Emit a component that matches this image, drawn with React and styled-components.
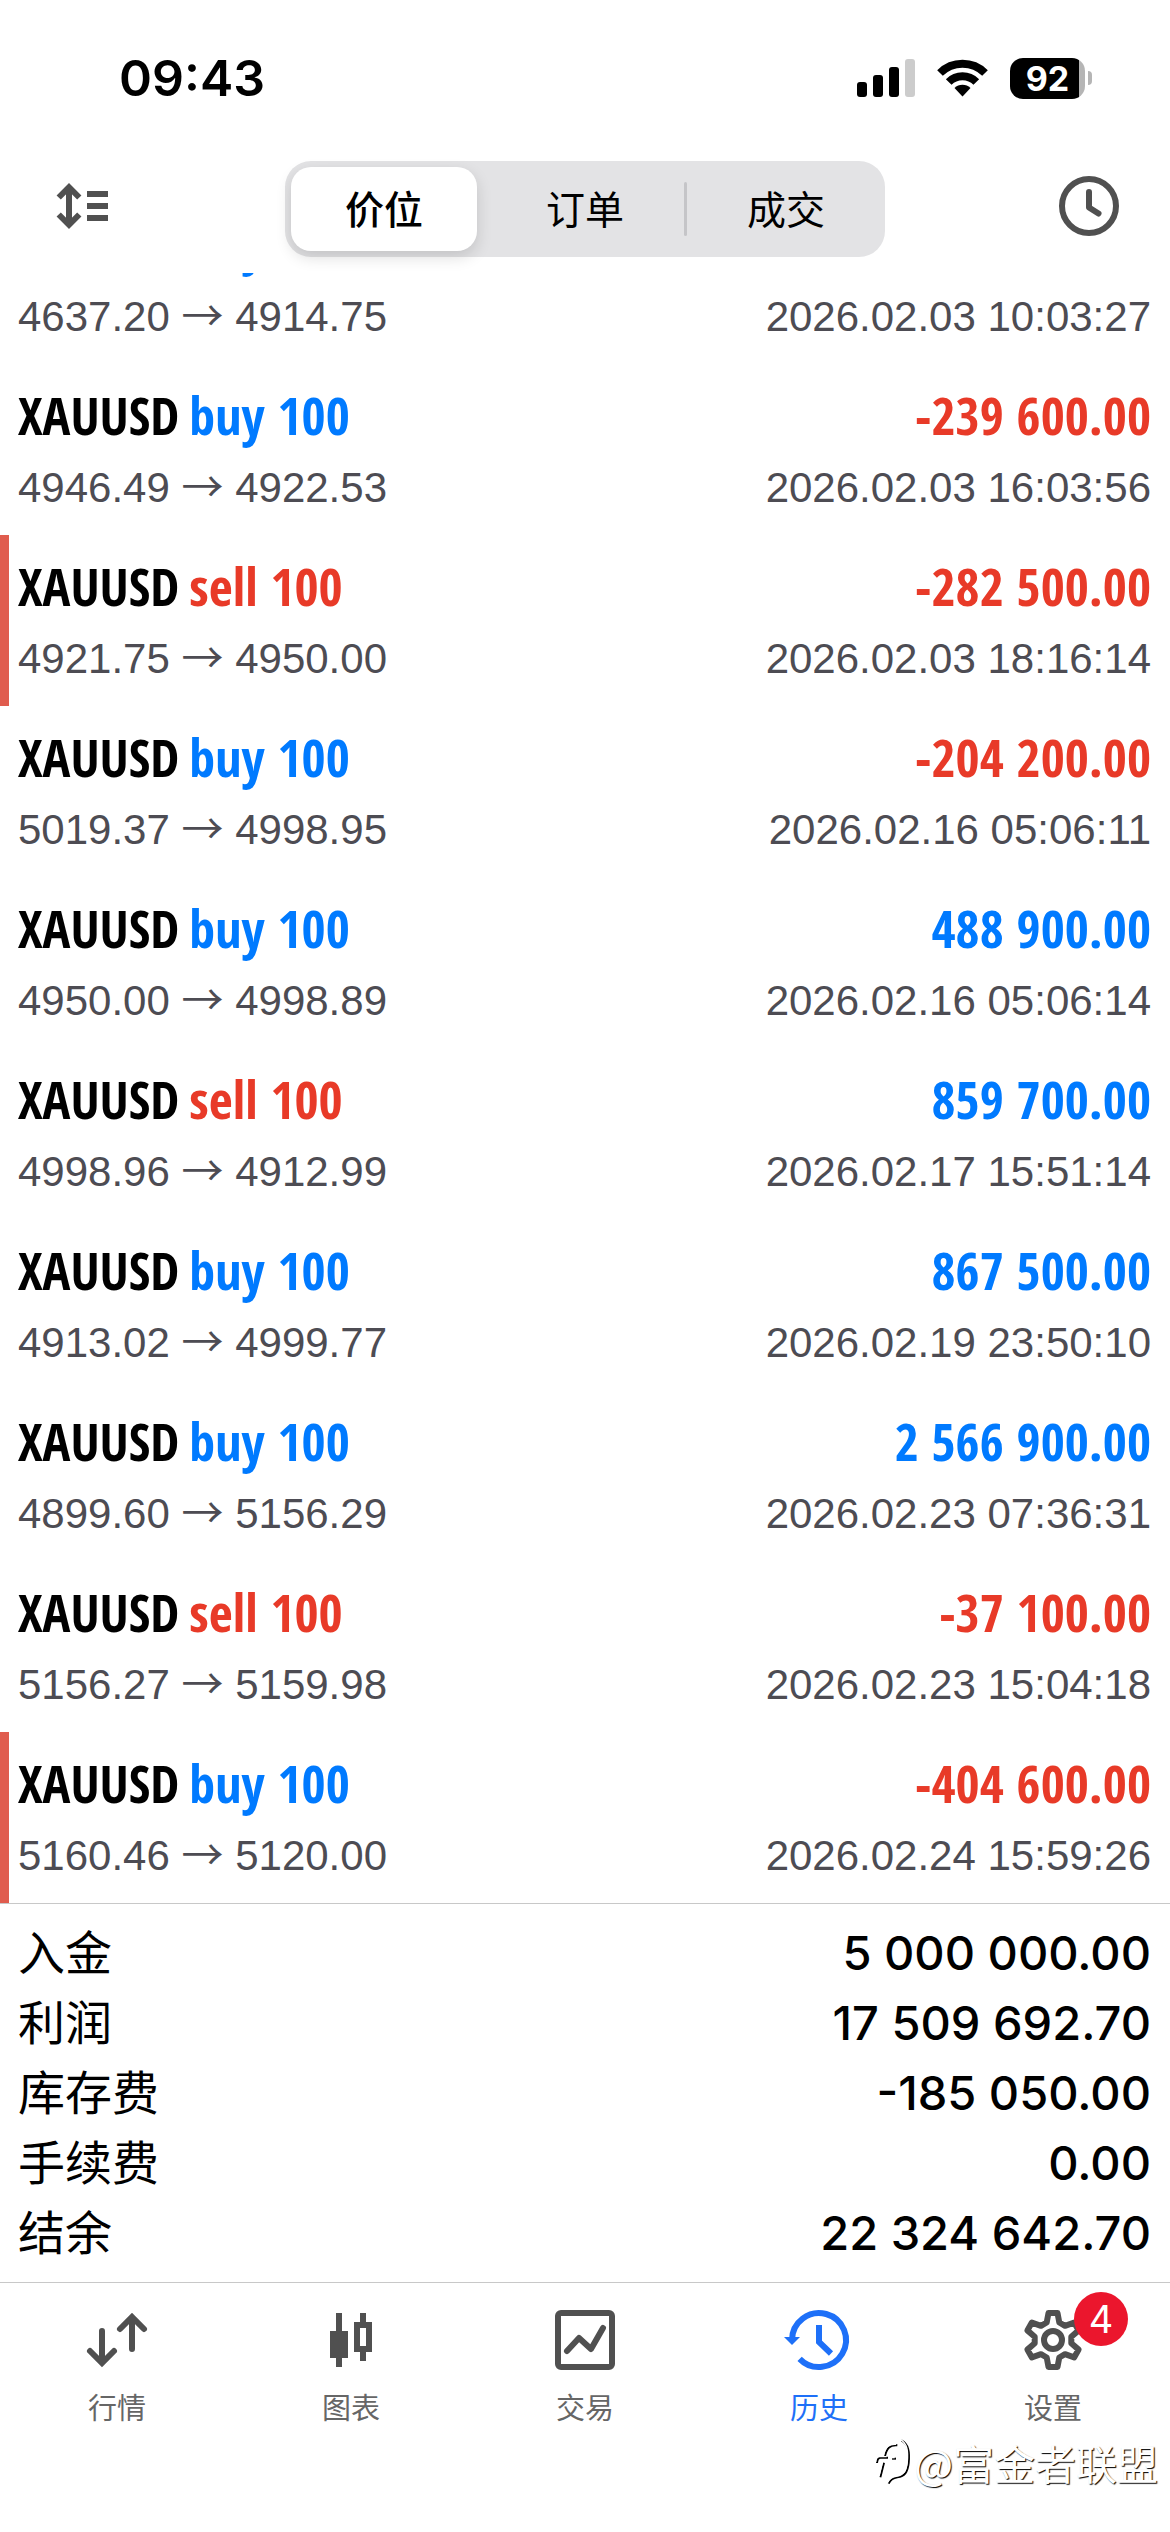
import styled, { createGlobalStyle } from "styled-components";

const GlobalStyle = createGlobalStyle`
  :root {
    --blue: #007aff;
    --red: #e83a28;
    --icon: #505050;
    --line: #c8c8c8;
    --cjk: "Noto Sans CJK SC", sans-serif;
    --ui: "Inter", "Noto Sans CJK SC", sans-serif;
  }
  * { box-sizing: border-box; }
  body { margin: 0; background: #fff; color: #000; font-family: var(--ui); }
`;

const Screen = styled.div`
  width: 100%;
  height: 100dvh;
  display: flex;
  flex-direction: column;
  position: relative;
  background: #fff;
`;

/* status bar */
const StatusBar = styled.header`
  flex: none;
  height: 156px;
  padding: 0 78px 0 119px;
  display: flex;
  align-items: center;
  justify-content: space-between;
`;
const Time = styled.time`
  font-size: 50px;
  font-weight: 600;
`;
const StatusIcons = styled.div`
  display: flex;
  align-items: center;
  gap: 22px;
`;
const Battery = styled.div`
  display: flex;
  align-items: center;
  gap: 3px;
`;
const BatteryBody = styled.div`
  width: 75px;
  height: 41px;
  border-radius: 13px;
  background: linear-gradient(to right, #000 92%, #b5b5b5 92%);
  color: #fff;
  font-size: 34px;
  font-weight: 700;
  line-height: 41px;
  text-align: center;
`;
const BatteryTip = styled.div`
  width: 4px;
  height: 14px;
  border-radius: 0 4px 4px 0;
  background: #b5b5b5;
`;

/* toolbar */
const Toolbar = styled.div`
  flex: none;
  padding: 5px 51px 16px;
  display: grid;
  grid-template-columns: 1fr minmax(0, 600px) 1fr;
  align-items: center;
`;
const IconButton = styled.button`
  width: 60px;
  height: 60px;
  margin-bottom: 6px;
  padding: 0;
  border: 0;
  background: none;
  color: var(--icon);
  justify-self: ${(p) => p.$side};
`;
const Segments = styled.div`
  height: 96px;
  padding: 6px;
  display: flex;
  align-items: center;
  border-radius: 26px;
  background: #e3e3e5;
`;
const Segment = styled.button`
  flex: 1;
  height: 84px;
  padding: 0 0 4px;
  border: 0;
  border-radius: 20px;
  background: ${(p) => (p.$active ? "#fff" : "transparent")};
  box-shadow: ${(p) => (p.$active ? "0 6px 16px rgba(0, 0, 0, 0.14)" : "none")};
  color: #000;
  font-family: var(--cjk);
  font-size: 39px;
  font-weight: ${(p) => (p.$active ? 500 : 400)};
`;
const Divider = styled.span`
  width: 3px;
  height: 54px;
  margin: 0 6px;
  border-radius: 2px;
  background: ${(p) => (p.$hidden ? "transparent" : "#c5c5c8")};
`;

/* deals, scrolled to the newest */
const DealList = styled.ul`
  flex: 1;
  min-height: 0;
  margin: 0;
  padding: 0;
  overflow: hidden;
  list-style: none;
  display: flex;
  flex-direction: column;
  justify-content: flex-end;
`;
const Deal = styled.li`
  flex: none;
  height: 171px;
  padding: 15px 19px 10px 18px;
  box-shadow: ${(p) => (p.$marked ? "inset 9px 0 0 #e05c4e" : "none")};
`;
const DealLine = styled.div`
  display: flex;
  justify-content: space-between;
  white-space: nowrap;
`;
const Title = styled(DealLine)`
  height: 72px;
  line-height: 72px;
  font-family: "Open Sans Condensed", "Open Sans", sans-serif;
  font-size: 52px;
  font-weight: 700;
`;
const Detail = styled(DealLine)`
  height: 74px;
  line-height: 74px;
  font-family: "Liberation Sans", sans-serif;
  font-size: 42px;
  color: #4d4c53;
`;
const DealName = styled.span`
  display: flex;
  gap: 10px;
`;
const Tone = styled.span`
  color: var(--${(p) => p.$tone});
`;
const Arrow = styled.span`
  font-family: var(--cjk);
  line-height: 42px;
`;

/* totals */
const Summary = styled.dl`
  flex: none;
  margin: 0;
  padding: 14px 19px 14px 18px;
  border-top: 1px solid var(--line);
  font-size: 47px;
`;
const SummaryRow = styled.div`
  height: 70px;
  display: flex;
  justify-content: space-between;
`;
const Label = styled.dt`
  font-family: var(--cjk);
  line-height: 64px;
`;
const Value = styled.dd`
  margin: 0;
  font-weight: 500;
  line-height: 70px;
`;

/* tabs */
const TabBar = styled.nav`
  flex: none;
  height: 250px;
  padding-top: 27px;
  border-top: 1px solid var(--line);
  display: grid;
  grid-template-columns: repeat(5, 1fr);
  align-items: start;
`;
const Tab = styled.a`
  display: flex;
  flex-direction: column;
  align-items: center;
  gap: 16px;
  color: ${(p) => (p.$active ? "#1e70f8" : "var(--icon)")};
  text-decoration: none;
`;
const TabIcon = styled.span`
  position: relative;
  height: 60px;
`;
const TabLabel = styled.span`
  font-family: var(--cjk);
  font-size: 29px;
  line-height: 40px;
  color: ${(p) => (p.$active ? "inherit" : "#666")};
`;
const Badge = styled.span`
  position: absolute;
  top: -18px;
  left: 51px;
  width: 54px;
  height: 54px;
  border-radius: 50%;
  background: #eb162d;
  color: #fff;
  font-size: 38px;
  line-height: 54px;
  text-align: center;
`;

const Watermark = styled.div`
  position: absolute;
  right: 12px;
  bottom: 40px;
  display: flex;
  align-items: center;
  gap: 2px;
  color: #fff;
  font-family: var(--cjk);
  font-size: 41px;
  line-height: 60px;
  text-shadow: 1px 1px 1px #000;
`;

const Icon = ({ children, ...rest }) => (
  <svg
    width="60"
    height="60"
    viewBox="0 0 60 60"
    fill="none"
    stroke="currentColor"
    strokeWidth="6"
    overflow="visible"
    aria-hidden="true"
    {...rest}
  >
    {children}
  </svg>
);

const SortIcon = () => (
  <Icon>
    <path d="M18 12V48M7.700 21.500 18 11.200 28.300 21.500M7.700 38.500 18 48.800 28.300 38.500" />
    <path d="M36 18H57M36 30H57M36 42H57" />
  </Icon>
);

const ClockIcon = () => (
  <Icon strokeLinecap="round" strokeLinejoin="round">
    <circle cx="30" cy="30" r="27" />
    <path d="M30 16V31.500L39.500 37.500" />
  </Icon>
);

const QuotesIcon = () => (
  <Icon strokeLinecap="round">
    <path d="M15 21V52M3 41 15 53 27 41" />
    <path d="M45 39V8M33 19 45 7 57 19" />
  </Icon>
);

const ChartIcon = () => (
  <Icon stroke="none" fill="currentColor">
    <path d="M15 3H21V21H27V48H21V57H15V48H9V21H15Z" />
    <path
      fillRule="evenodd"
      d="M39 3H45V12H51V42H45V51H39V42H33V12H39ZM39 18V36H45V18Z"
    />
  </Icon>
);

const TradeIcon = () => (
  <Icon strokeLinecap="round" strokeLinejoin="round">
    <rect x="3" y="3" width="54" height="54" rx="3" />
    <path d="M12 41 24 28 36 39 48 18" />
  </Icon>
);

const HistoryIcon = () => (
  <Icon>
    <path d="M3 30A27 27 0 1 1 10.600 48.800" />
    <path d="M30 15V32L42 43.500" />
    <path d="M-5 27H11L3 35Z" fill="currentColor" stroke="none" />
  </Icon>
);

// one tooth, repeated every 60 degrees round the centre
const tooth = [[-6.3, -17.5], [-4.5, -27], [4.5, -27], [6.3, -17.5]];
const gearPoints = [0, 60, 120, 180, 240, 300]
  .flatMap((deg) => {
    const a = (deg * Math.PI) / 180;
    return tooth.map(([x, y]) => [
      30 + x * Math.cos(a) - y * Math.sin(a),
      30 + x * Math.sin(a) + y * Math.cos(a),
    ]);
  })
  .join(" ");

const SettingsIcon = () => (
  <Icon strokeLinejoin="round">
    <polygon points={gearPoints} />
    <circle cx="30" cy="30" r="9" />
  </Icon>
);

const SignalIcon = () => (
  <svg width="58" height="38" viewBox="0 0 58 38" aria-hidden="true">
    <rect x="0" y="23" width="10" height="15" rx="3" />
    <rect x="16" y="16" width="10" height="22" rx="3" />
    <rect x="32" y="8" width="10" height="30" rx="3" />
    <rect x="48" y="0" width="10" height="38" rx="3" fill="#ccc" />
  </svg>
);

const WifiIcon = () => (
  <svg width="51" height="38" viewBox="0 0 51 38" aria-hidden="true">
    <g fill="none" stroke="#000" strokeWidth="8">
      <path d="M3 14A32 32 0 0 1 48 14" />
      <path d="M11.700 23A19.500 19.500 0 0 1 39.300 23" />
    </g>
    <path d="M17.500 29A11.500 11.500 0 0 1 33.500 29L25.500 37.500Z" />
  </svg>
);

const LogoStrokes = () => (
  <>
    <path d="M108 72C86 70 76 80 70 108M47 125Q48 109 58 109H80M68 124 57 168" />
    <path d="M120 57C142 68 145 92 142 125C139 152 131 164 108 168C94 170 87 176 82 187" />
    <path d="M92 112H104" />
  </>
);

const WatermarkLogo = () => (
  <svg
    width="38"
    height="48"
    viewBox="38 50 114 144"
    fill="none"
    aria-hidden="true"
  >
    <g stroke="#000" strokeWidth="6">
      <LogoStrokes />
    </g>
    <g stroke="#fff" strokeWidth="4" transform="translate(-4 -3)">
      <LogoStrokes />
    </g>
  </svg>
);

const deals = [
  { side: "buy", from: "4637.20", to: "4914.75", profit: "2 775 500.00", time: "2026.02.03 10:03:27" },
  { side: "buy", from: "4946.49", to: "4922.53", profit: "-239 600.00", time: "2026.02.03 16:03:56" },
  { side: "sell", from: "4921.75", to: "4950.00", profit: "-282 500.00", time: "2026.02.03 18:16:14", marked: true },
  { side: "buy", from: "5019.37", to: "4998.95", profit: "-204 200.00", time: "2026.02.16 05:06:11" },
  { side: "buy", from: "4950.00", to: "4998.89", profit: "488 900.00", time: "2026.02.16 05:06:14" },
  { side: "sell", from: "4998.96", to: "4912.99", profit: "859 700.00", time: "2026.02.17 15:51:14" },
  { side: "buy", from: "4913.02", to: "4999.77", profit: "867 500.00", time: "2026.02.19 23:50:10" },
  { side: "buy", from: "4899.60", to: "5156.29", profit: "2 566 900.00", time: "2026.02.23 07:36:31" },
  { side: "sell", from: "5156.27", to: "5159.98", profit: "-37 100.00", time: "2026.02.23 15:04:18" },
  { side: "buy", from: "5160.46", to: "5120.00", profit: "-404 600.00", time: "2026.02.24 15:59:26", marked: true },
];

const totals = [
  ["入金", "5 000 000.00"],
  ["利润", "17 509 692.70"],
  ["库存费", "-185 050.00"],
  ["手续费", "0.00"],
  ["结余", "22 324 642.70"],
];

const tabs = [
  { label: "行情", icon: <QuotesIcon /> },
  { label: "图表", icon: <ChartIcon /> },
  { label: "交易", icon: <TradeIcon /> },
  { label: "历史", icon: <HistoryIcon />, active: true },
  { label: "设置", icon: <SettingsIcon />, badge: 4 },
];

const App = () => {
  return (
    <Screen>
      <GlobalStyle />
      <StatusBar>
        <Time>09:43</Time>
        <StatusIcons>
          <SignalIcon />
          <WifiIcon />
          <Battery>
            <BatteryBody>92</BatteryBody>
            <BatteryTip />
          </Battery>
        </StatusIcons>
      </StatusBar>

      <Toolbar>
        <IconButton type="button" $side="start" aria-label="排序">
          <SortIcon />
        </IconButton>
        <Segments role="group">
          <Segment type="button" $active aria-pressed="true">价位</Segment>
          <Divider $hidden />
          <Segment type="button" aria-pressed="false">订单</Segment>
          <Divider />
          <Segment type="button" aria-pressed="false">成交</Segment>
        </Segments>
        <IconButton type="button" $side="end" aria-label="时间范围">
          <ClockIcon />
        </IconButton>
      </Toolbar>

      <DealList>
        {deals.map((deal) => (
          <Deal key={deal.time} $marked={deal.marked}>
            <Title>
              <DealName>
                <span>XAUUSD</span>
                <Tone $tone={deal.side === "buy" ? "blue" : "red"}>{deal.side} 100</Tone>
              </DealName>
              <Tone $tone={deal.profit.startsWith("-") ? "red" : "blue"}>{deal.profit}</Tone>
            </Title>
            <Detail>
              <span>
                {deal.from} <Arrow>→</Arrow> {deal.to}
              </span>
              <span>{deal.time}</span>
            </Detail>
          </Deal>
        ))}
      </DealList>

      <Summary>
        {totals.map(([label, value]) => (
          <SummaryRow key={label}>
            <Label>{label}</Label>
            <Value>{value}</Value>
          </SummaryRow>
        ))}
      </Summary>

      <TabBar>
        {tabs.map((tab) => (
          <Tab key={tab.label} href="#" $active={tab.active}>
            <TabIcon>
              {tab.icon}
              {tab.badge && <Badge>{tab.badge}</Badge>}
            </TabIcon>
            <TabLabel $active={tab.active}>{tab.label}</TabLabel>
          </Tab>
        ))}
      </TabBar>

      <Watermark>
        <WatermarkLogo />
        <span>@富金者联盟</span>
      </Watermark>
    </Screen>
  );
};

export default App;
